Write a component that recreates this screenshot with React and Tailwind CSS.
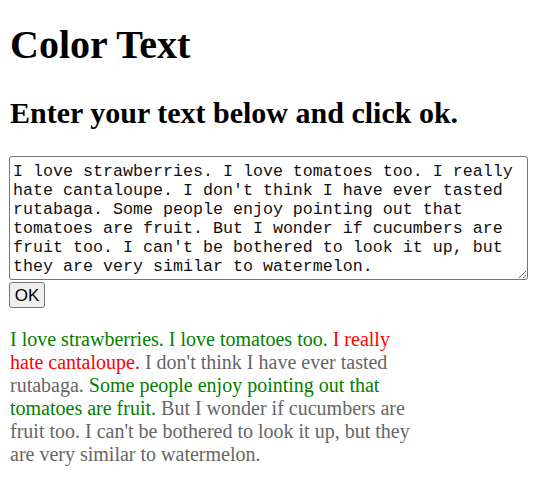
export default function App() {
  const text =
    "I love strawberries. I love tomatoes too. I really hate cantaloupe. I don't think I have ever tasted rutabaga. Some people enjoy pointing out that tomatoes are fruit. But I wonder if cucumbers are fruit too. I can't be bothered to look it up, but they are very similar to watermelon.";

  return (
    <div className="px-[10px] pb-4 bg-white text-black font-['Liberation_Serif',serif]">
      {/* Title */}
      <h1 className="mt-[21.5px] text-[40px] font-bold leading-[46px]">Color Text</h1>
      <h2 className="mt-[28.5px] text-[30px] font-bold leading-[34.5px]">
        Enter your text below and click ok.
      </h2>

      {/* Input */}
      <textarea
        className="block mt-[25.5px] -ml-px w-[519px] h-[124px] pl-[3px] pr-[2.5px] pt-[6px] pb-[2px] border border-[#767676] rounded-[3px] text-[16.67px] leading-[18.9px] text-[#111] font-['Liberation_Mono',monospace] overflow-hidden"
        defaultValue={text}
        spellCheck={false}
      />
      <button className="block mt-[2px] -ml-px w-[36px] h-[26px] bg-[#efefef] border border-[#767676] rounded-[3px] text-[17px] leading-none text-black font-['Liberation_Sans',Arial,sans-serif]">
        OK
      </button>

      {/* Result */}
      <p className="mt-[20px] w-[416px] text-[20px] leading-[23px]">
        <span className="text-[#008000]">I love strawberries. I love tomatoes too. </span>
        <span className="text-[#ff0000]">I really hate cantaloupe. </span>
        <span className="text-[#666666]">I don't think I have ever tasted rutabaga. </span>
        <span className="text-[#008000]">Some people enjoy pointing out that tomatoes are fruit. </span>
        <span className="text-[#666666]">
          But I wonder if cucumbers are fruit too. I can't be bothered to look it up, but they are very similar to
          watermelon.
        </span>
      </p>
    </div>
  );
}
